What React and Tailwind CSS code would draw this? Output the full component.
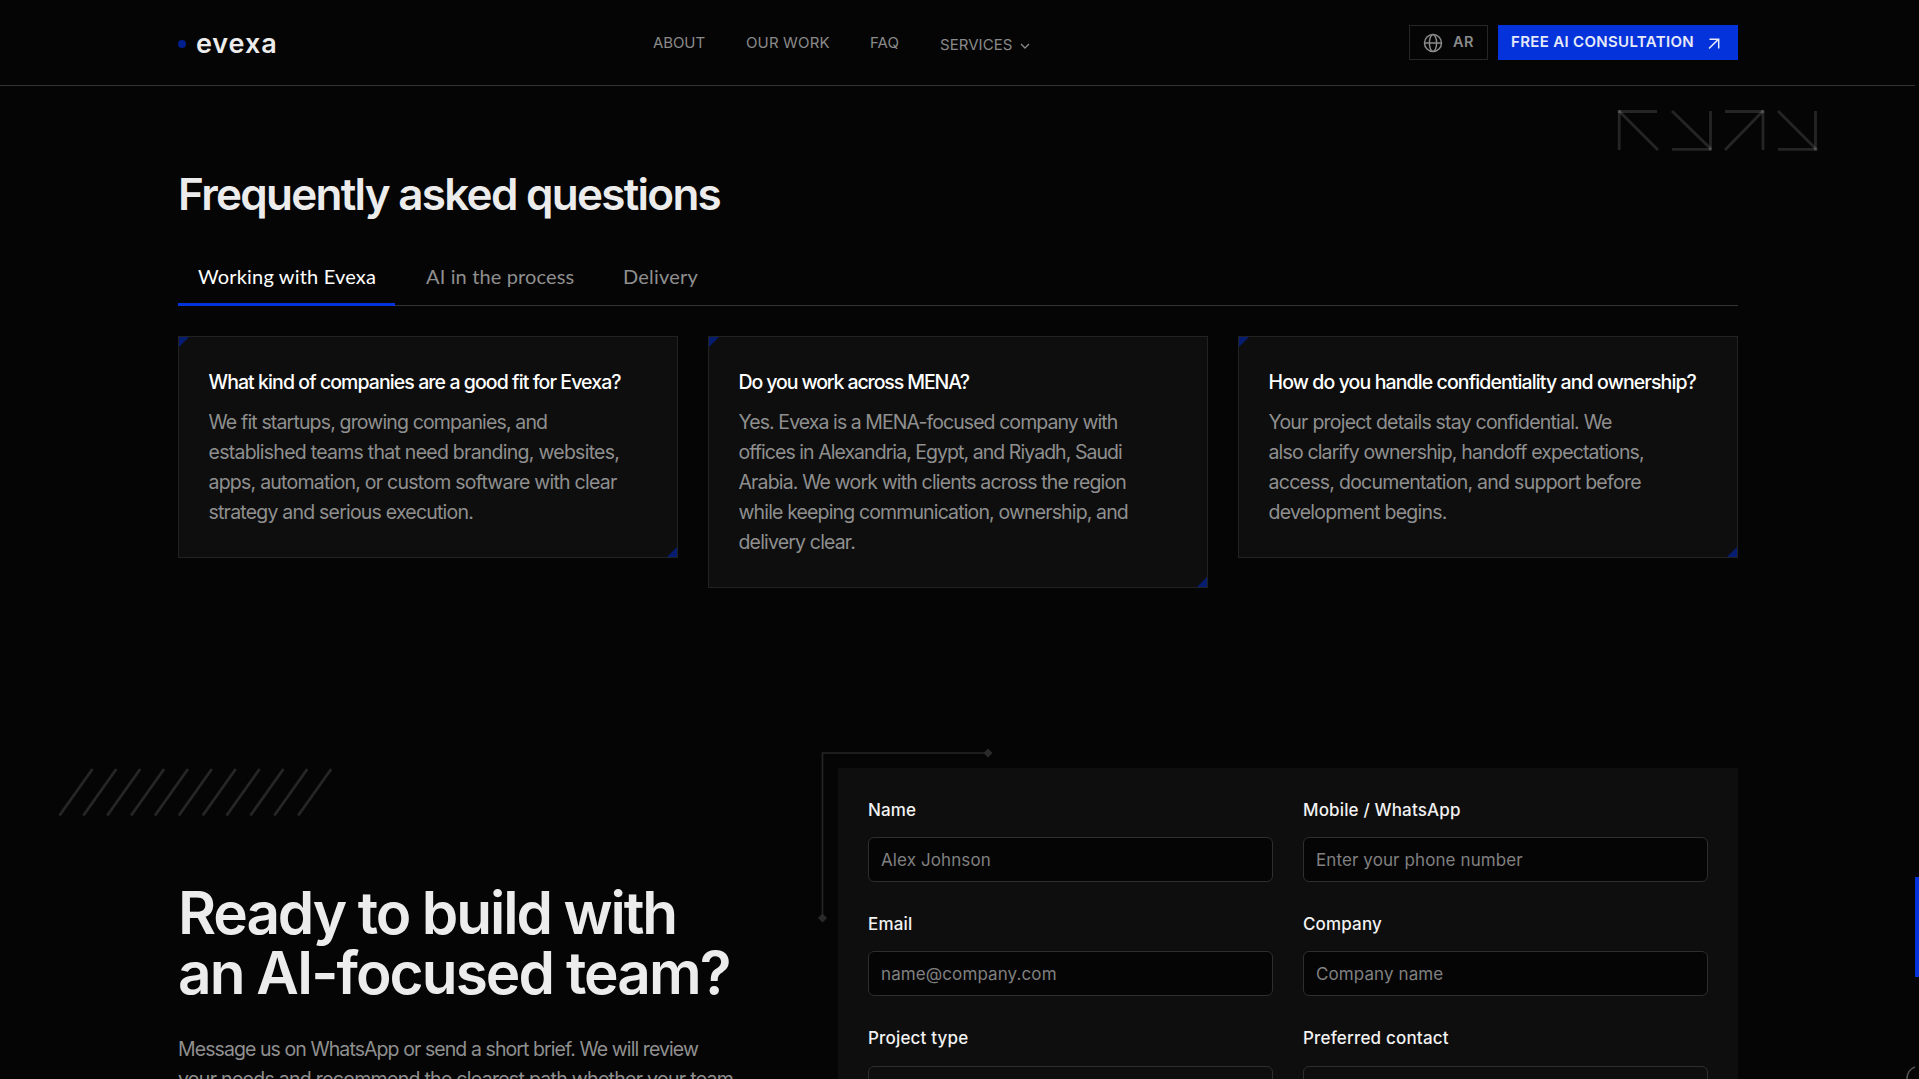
const NAV = [
  { label: "ABOUT", cls: "w-[93px] tracking-[-0.1px]" },
  { label: "OUR WORK", cls: "w-[124px] tracking-[0.15px]" },
  { label: "FAQ", cls: "w-[70px] tracking-[0.1px]" },
];

const TABS = [
  { label: "Working with Evexa", cls: "w-[217px] text-white tracking-[0.18px]", active: true },
  { label: "AI in the process", cls: "w-[187px] pl-[21px] text-[#8f8f8f] tracking-[0.14px]" },
  { label: "Delivery", cls: "w-[114px] pl-[21px] text-[#8f8f8f] tracking-[0.22px]" },
];

const CARDS = [
  {
    title: "What kind of companies are a good fit for Evexa?",
    titleCls: "tracking-[-0.92px]",
    lines: [
      ["We fit startups, growing companies, and", "tracking-[-0.85px]"],
      ["established teams that need branding, websites,", "tracking-[-0.74px]"],
      ["apps, automation, or custom software with clear", "tracking-[-0.76px]"],
      ["strategy and serious execution.", "tracking-[-0.79px]"],
    ],
  },
  {
    title: "Do you work across MENA?",
    titleCls: "tracking-[-1.1px]",
    lines: [
      ["Yes. Evexa is a MENA-focused company with", "tracking-[-0.93px]"],
      ["offices in Alexandria, Egypt, and Riyadh, Saudi", "tracking-[-0.95px]"],
      ["Arabia. We work with clients across the region", "tracking-[-0.84px]"],
      ["while keeping communication, ownership, and", "tracking-[-0.86px]"],
      ["delivery clear.", "tracking-[-0.83px]"],
    ],
  },
  {
    title: "How do you handle confidentiality and ownership?",
    titleCls: "tracking-[-0.89px]",
    lines: [
      ["Your project details stay confidential. We", "tracking-[-0.78px]"],
      ["also clarify ownership, handoff expectations,", "tracking-[-0.85px]"],
      ["access, documentation, and support before", "tracking-[-0.73px]"],
      ["development begins.", "tracking-[-0.75px]"],
    ],
  },
];

const FIELDS = [
  { label: "Name", placeholder: "Alex Johnson" },
  { label: "Mobile / WhatsApp", placeholder: "Enter your phone number" },
  { label: "Email", placeholder: "name@company.com" },
  { label: "Company", placeholder: "Company name" },
];

const HATCHES = [0, 1, 2, 3, 4, 5, 6, 7, 8, 9, 10];

function Header() {
  return (
    <header className="flex h-[86px] w-[1915px] items-start border-b border-[#333] pl-[178px]">
      <div className="flex w-[475px] items-center pt-[28px]">
        <span className="size-2 rounded-full bg-[#001f8c]" />
        <span className="ml-[10px] text-[27px] leading-[32px] font-semibold tracking-[0.9px] text-[#ececec]">evexa</span>
      </div>
      <nav className="flex pt-[33px] text-[15px] leading-5 text-[#8a8a8a]">
        {NAV.map((n) => (
          <a key={n.label} className={n.cls}>{n.label}</a>
        ))}
        <a className="flex items-center pt-0.5">
          <span className="tracking-[0.05px]">SERVICES</span>
          <svg className="mt-px ml-2" width="10" height="6" viewBox="0 0 10 6" fill="none" stroke="currentColor" strokeWidth="1.3">
            <path d="M1 1l4 4 4-4" />
          </svg>
        </a>
      </nav>
      <div className="mr-[177px] ml-auto flex gap-[10px] pt-[25px]">
        <button className="flex h-[35px] w-[79px] items-center border border-[#262626] pl-[13px] text-[#8a8a8a]">
          <svg width="20" height="20" viewBox="0 0 20 20" fill="none" stroke="currentColor" strokeWidth="1.5">
            <circle cx="10" cy="10" r="8.5" />
            <ellipse cx="10" cy="10" rx="3.6" ry="8.5" />
            <path d="M1.5 10h17" />
          </svg>
          <span className="ml-[10px] pb-px text-[14.5px] font-semibold tracking-[0.5px]">AR</span>
        </button>
        <button className="flex h-[35px] w-[240px] items-center bg-[#0433dc] pl-[13px] text-[#e6eaf8]">
          <span className="pb-px text-[15px] font-semibold tracking-[0.33px] whitespace-nowrap">FREE AI CONSULTATION</span>
          <svg className="mt-0.5 ml-[14px]" width="12" height="12" viewBox="0 0 12 12" fill="none" stroke="currentColor" strokeWidth="1.5">
            <path d="M1 10.500L10.300 1.400M1.500 1.200h9.200v9.200" />
          </svg>
        </button>
      </div>
    </header>
  );
}

function ArrowRow() {
  return (
    <svg className="absolute top-[108px] left-[1616px]" width="204" height="46" viewBox="0 0 204 46" fill="none" stroke="#ffffff" strokeOpacity="0.13" strokeWidth="2.8">
      <path d="M2 3.500h39" />
      <path d="M3.200 2v40" />
      <path d="M3 3l39 39" />
      <path d="M56 3l39 38" />
      <path d="M94.500 3v39.500" />
      <path d="M56 41.300h39.500" />
      <path d="M109 3.500h39" />
      <path d="M147 2v40" />
      <path d="M147 3l-38 39" />
      <path d="M162 3l38 38" />
      <path d="M199.500 3v39.500" />
      <path d="M162 41.300h39.500" />
    </svg>
  );
}

function Card({ card }) {
  return (
    <article className="relative border border-[#222] bg-[#0e0e0e] py-[30px] pl-[29.5px]">
      <span className="absolute top-0 left-0 size-[10px] bg-[#061c70] [clip-path:polygon(0_0,100%_0,0_100%)]" />
      <span className="absolute right-0 bottom-0 size-[10px] bg-[#061c70] [clip-path:polygon(100%_0,100%_100%,0_100%)]" />
      <h3 className={`text-[19.5px] leading-[30px] font-medium whitespace-nowrap text-white ${card.titleCls}`}>{card.title}</h3>
      <p className="mt-[10px] text-[19.5px] leading-[30px] text-[#8f8f8f]">
        {card.lines.map(([text, cls]) => (
          <span key={text} className={`block whitespace-nowrap ${cls}`}>{text}</span>
        ))}
      </p>
    </article>
  );
}

function Faq() {
  return (
    <section className="ml-[178px] w-[1560px] pt-[81px]">
      <h2 className="text-[44px] leading-[54px] font-semibold tracking-[-1.72px] text-[#ececec]">Frequently asked questions</h2>
      <div className="mt-10 flex h-[45px] gap-[10px] border-b border-[#333] font-['Lato',sans-serif] text-[20px] leading-[30px]">
        {TABS.map((t) => (
          <button key={t.label} className={`relative flex pl-5 whitespace-nowrap ${t.cls}`}>
            {t.label}
            {t.active && <span className="absolute -bottom-px left-0 h-[3px] w-full bg-[#0433dc]" />}
          </button>
        ))}
      </div>
      <div className="mt-[30px] grid h-[252px] grid-cols-3 items-start gap-[30px]">
        {CARDS.map((c) => (
          <Card key={c.title} card={c} />
        ))}
      </div>
    </section>
  );
}

function Contact() {
  return (
    <section className="relative mt-[180px] ml-[178px] flex w-[1560px] justify-between">
      <svg className="absolute top-0 left-[-120px]" width="276" height="50" viewBox="0 0 276 50" fill="none" stroke="#262626" strokeWidth="2.8">
        {HATCHES.map((i) => (
          <path key={i} d="M1.500 47.500L34.500 1" transform={`translate(${i * 23.87} 0)`} />
        ))}
      </svg>
      <div className="pt-[115px]">
        <h2 className="text-[58.5px] leading-[60px] font-semibold text-[#ececec]">
          <span className="block tracking-[-2.1px]">Ready to build with</span>
          <span className="block tracking-[-1.93px]">an AI-focused team?</span>
        </h2>
        <p className="mt-[31px] text-[19.5px] leading-[30px] whitespace-nowrap text-[#8f8f8f]">
          <span className="block tracking-[-0.92px]">Message us on WhatsApp or send a short brief. We will review</span>
          <span className="block tracking-[-0.71px]">your needs and recommend the clearest path whether your team</span>
        </p>
      </div>
      <form className="relative grid h-[330px] w-[900px] grid-cols-[405px_405px] content-start gap-[30px] bg-[#0e0e0e] p-[30px]">
        <svg className="absolute top-[-22px] left-[-22px]" width="180" height="180" viewBox="0 0 180 180" fill="none">
          <path d="M6.500 170V7H170" stroke="#262626" strokeWidth="1.6" />
          <path d="M172 2.500l4.500 4.500-4.500 4.500-4.500-4.500zM6.500 167.500l4.500 4.500-4.500 4.500-4.500-4.500z" fill="#2a2a2a" />
        </svg>
        {FIELDS.map((f) => (
          <label key={f.label} className="flex flex-col gap-[15px]">
            <span className="text-[17px] leading-6 font-medium tracking-[0.15px] text-[#f2f2f2]">{f.label}</span>
            <input
              placeholder={f.placeholder}
              className="h-[45px] w-full rounded-md border border-[#2e2e2e] bg-[#050505] px-3 text-[17px] tracking-[0.1px] placeholder:text-[#808080]"
            />
          </label>
        ))}
        {["Project type", "Preferred contact"].map((label) => (
          <div key={label} className="flex flex-col gap-4">
            <span className="text-[17px] leading-6 font-medium tracking-[0.18px] text-[#f2f2f2]">{label}</span>
            <div className="h-[45px] rounded-md border border-[#2e2e2e]" />
          </div>
        ))}
      </form>
    </section>
  );
}

export default function App() {
  return (
    <div className="relative h-[1079px] w-[1919px] overflow-hidden bg-[#050505] font-['Inter',sans-serif]">
      <Header />
      <ArrowRow />
      <Faq />
      <Contact />
      <svg className="absolute right-1 bottom-0" width="9" height="13" viewBox="0 0 9 13" fill="none">
        <path d="M1 13C1 7.500 4 3 9 1" stroke="#555555" strokeWidth="1.5" />
      </svg>
      <div className="absolute top-[877px] right-0 h-[100px] w-1 bg-[#0433dc]" />
    </div>
  );
}
